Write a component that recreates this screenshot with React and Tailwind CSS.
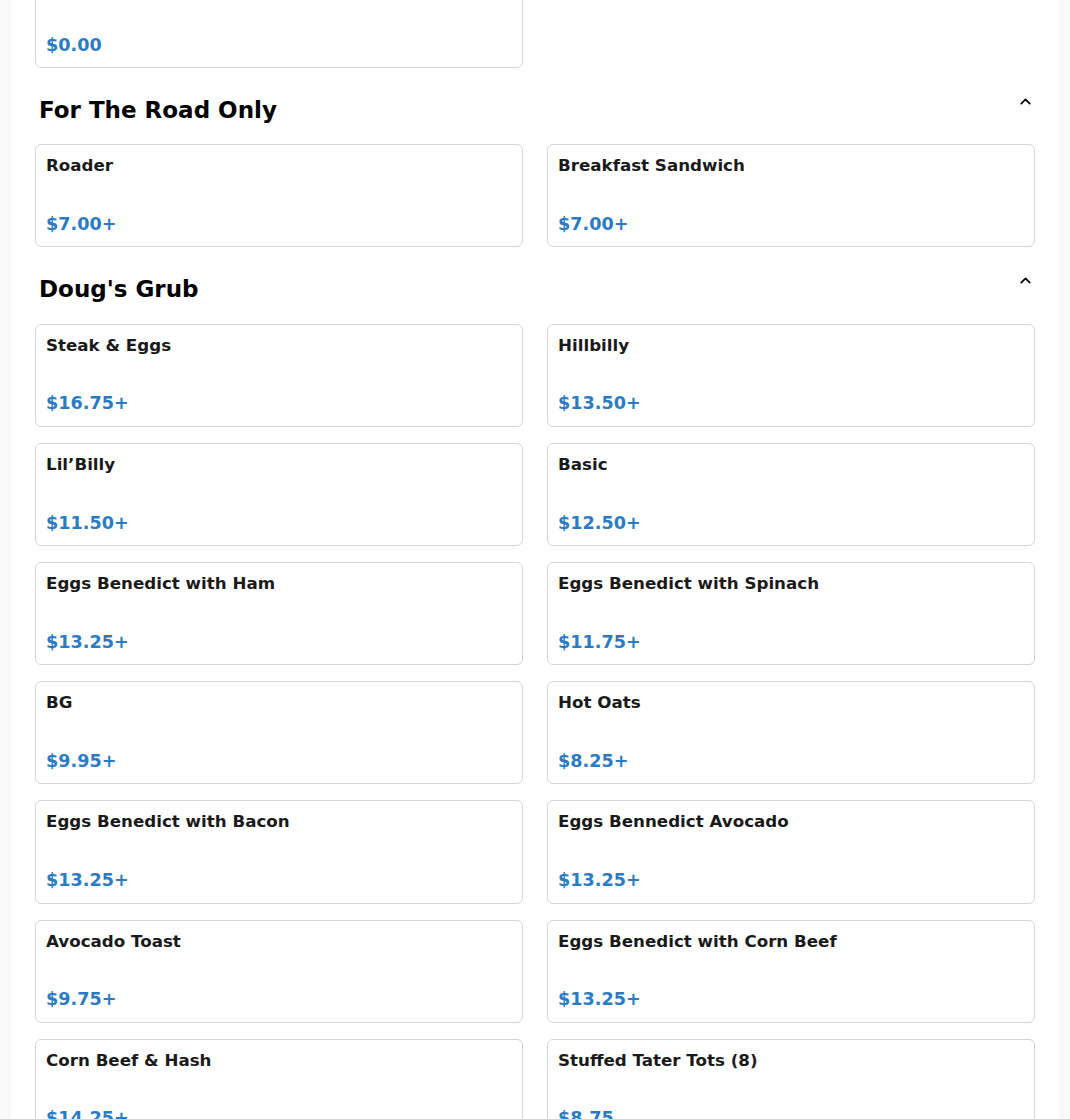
import { ChevronUp } from 'lucide-react';

const sections = [
  {
    title: null,
    items: [{ name: 'Soup of the Day', price: '$0.00' }],
  },
  {
    title: 'For The Road Only',
    items: [
      { name: 'Roader', price: '$7.00+' },
      { name: 'Breakfast Sandwich', price: '$7.00+' },
    ],
  },
  {
    title: "Doug's Grub",
    items: [
      { name: 'Steak & Eggs', price: '$16.75+' },
      { name: 'Hillbilly', price: '$13.50+' },
      { name: 'Lil’Billy', price: '$11.50+' },
      { name: 'Basic', price: '$12.50+' },
      { name: 'Eggs Benedict with Ham', price: '$13.25+' },
      { name: 'Eggs Benedict with Spinach', price: '$11.75+' },
      { name: 'BG', price: '$9.95+' },
      { name: 'Hot Oats', price: '$8.25+' },
      { name: 'Eggs Benedict with Bacon', price: '$13.25+' },
      { name: 'Eggs Bennedict Avocado', price: '$13.25+' },
      { name: 'Avocado Toast', price: '$9.75+' },
      { name: 'Eggs Benedict with Corn Beef', price: '$13.25+' },
      { name: 'Corn Beef & Hash', price: '$14.25+' },
      { name: 'Stuffed Tater Tots (8)', price: '$8.75' },
    ],
  },
];

function ItemCard({ item }) {
  return (
    <div className="border border-[#d6d6d6] rounded-md bg-white px-[10px] pt-2 pb-[9px] h-[103.2px] flex flex-col justify-between cursor-pointer">
      <div className="text-[16.7px] leading-[1.5] font-bold text-[#1a1a1a]">{item.name}</div>
      <div className="text-[17.6px] leading-[1.5] font-bold text-[#2b7bc4]">{item.price}</div>
    </div>
  );
}

export default function App() {
  return (
    <div className="min-h-screen bg-[#f9f9f9] overflow-hidden" style={{ fontFamily: '"DejaVu Sans", Verdana, sans-serif' }}>
      <div className="mx-[11px] bg-white px-6 pb-10 min-h-screen">
        {sections.map((section, i) => (
          <div key={i} className={i === 0 ? '-mt-[35px]' : 'mt-[25px]'}>
            {section.title && (
              <div className="flex items-start justify-between mb-[16.6px]">
                <h2 className="pl-1 text-[23px] leading-[1.5] font-bold text-black">{section.title}</h2>
                <button className="mt-0 mr-px text-black">
                  <ChevronUp size={17} strokeWidth={2.4} />
                </button>
              </div>
            )}
            <div className="grid grid-cols-2 gap-x-6 gap-y-4">
              {section.items.map((item) => (
                <ItemCard key={item.name} item={item} />
              ))}
            </div>
          </div>
        ))}
      </div>
    </div>
  );
}
